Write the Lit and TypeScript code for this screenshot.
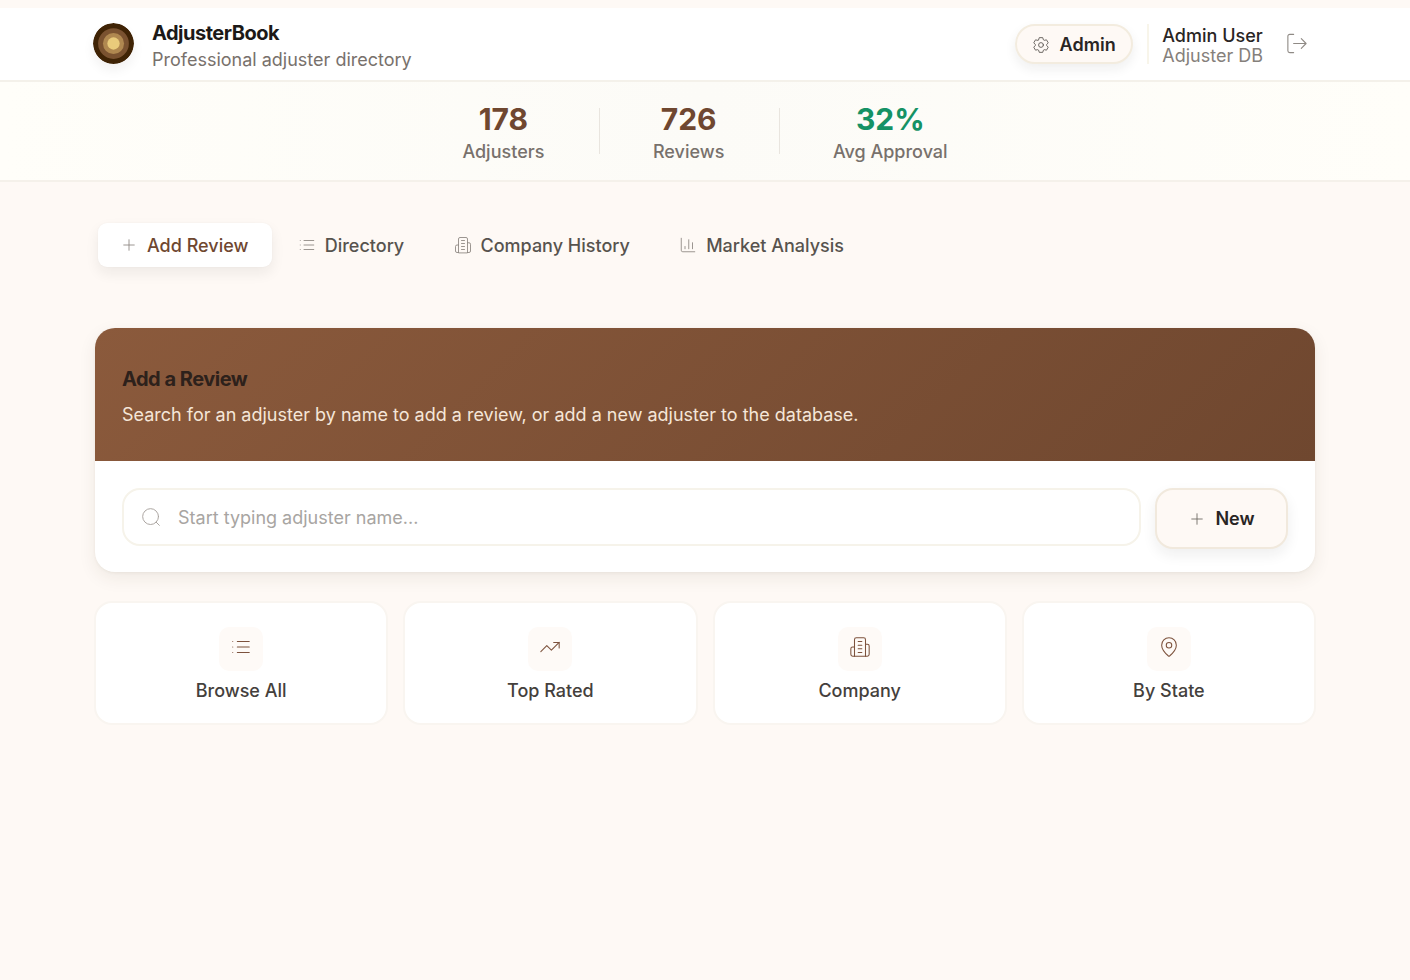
import { LitElement, html, css, svg } from 'lit';
import { customElement, property, state } from 'lit/decorators.js';
import { classMap } from 'lit/directives/class-map.js';

const ICONS: Record<string, unknown> = {
  plus: svg`<path d="M5 12h14M12 5v14" />`,
  list: svg`<path d="M8 6h13M8 12h13M8 18h13M3 6h.01M3 12h.01M3 18h.01" />`,
  building: svg`
    <path d="M6 22V4a2 2 0 0 1 2-2h8a2 2 0 0 1 2 2v18Z" />
    <path d="M6 12H4a2 2 0 0 0-2 2v6a2 2 0 0 0 2 2h2" />
    <path d="M18 9h2a2 2 0 0 1 2 2v9a2 2 0 0 1-2 2h-2" />
    <path d="M10 6h4M10 10h4M10 14h4M10 18h4" />`,
  chart: svg`<path d="M3 3v16a2 2 0 0 0 2 2h16M18 17V9M13 17V5M8 17v-3" />`,
  search: svg`<circle cx="11.5" cy="11.5" r="9.5" /><path d="m22 22-3.8-3.8" />`,
  trending: svg`<path d="M16 7h6v6" /><path d="m22 7-8.5 8.5-5-5L2 17" />`,
  pin: svg`
    <path d="M20 10c0 4.993-5.539 10.193-7.399 11.799a1 1 0 0 1-1.202 0C9.539 20.193 4 14.993 4 10a8 8 0 0 1 16 0" />
    <circle cx="12" cy="10" r="3" />`,
  logout: svg`<path d="M9 21.5H5a2 2 0 0 1-2-2v-15a2 2 0 0 1 2-2h4M17 17l5-5-5-5M22 12H9" />`,
  settings: svg`
    <path d="M8.8 5.1 9.7 2.2h4.6l.9 2.9 1.18.68 2.96-.67 2.3 3.98-2.06 2.23v1.36l2.06 2.23-2.3 3.98-2.96-.67-1.18.68-.9 2.9H9.7l-.9-2.9-1.18-.68-2.96.67-2.3-3.98 2.06-2.23v-1.36L2.36 9.09l2.3-3.98 2.96.67Z" />
    <circle cx="12" cy="12" r="3.2" />`
};

@customElement('ab-icon')
class AbIcon extends LitElement {
  @property() name = '';

  static styles = css`
    :host {
      display: inline-flex;
      flex: none;
      width: 18px;
      height: 18px;
    }
    svg {
      width: 100%;
      height: 100%;
      fill: none;
      stroke: currentColor;
      stroke-width: 1.15;
      stroke-linecap: round;
      stroke-linejoin: round;
    }
  `;

  render() {
    return html`<svg viewBox="0 0 24 24">${ICONS[this.name]}</svg>`;
  }
}

@customElement('app-root')
class AppRoot extends LitElement {
  @state() private activeTab = 'add';

  private stats = [
    { value: '178', label: 'Adjusters' },
    { value: '726', label: 'Reviews' },
    { value: '32%', label: 'Avg Approval', good: true }
  ];

  private tabs = [
    { id: 'add', icon: 'plus', label: 'Add Review' },
    { id: 'directory', icon: 'list', label: 'Directory' },
    { id: 'company', icon: 'building', label: 'Company History' },
    { id: 'market', icon: 'chart', label: 'Market Analysis' }
  ];

  private shortcuts = [
    { icon: 'list', label: 'Browse All' },
    { icon: 'trending', label: 'Top Rated' },
    { icon: 'building', label: 'Company' },
    { icon: 'pin', label: 'By State' }
  ];

  static styles = css`
    :host {
      display: block;
      box-sizing: border-box;
      min-height: 980px;
      padding-top: 8px;
      background: #fef9f5;
      color: #1c1917;
      font-family: Inter, 'Liberation Sans', sans-serif;
      font-size: 18px;
      line-height: 24px;
    }
    * {
      box-sizing: border-box;
    }
    button,
    input {
      font: inherit;
      color: inherit;
      margin: 0;
    }

    .header {
      display: flex;
      align-items: center;
      height: 74px;
      padding: 0 102px 0 93px;
      background: #fff;
      border-bottom: 2px solid #f4f1ea;
    }
    .logo {
      width: 41px;
      height: 41px;
      margin-bottom: 1px;
      border-radius: 50%;
      box-shadow: 0 6px 12px rgba(28, 25, 23, 0.06);
    }
    .brand {
      flex: 1;
      margin-left: 18px;
      padding-top: 3px;
    }
    .brand-name {
      font-size: 20px;
      font-weight: 700;
      line-height: 28px;
      letter-spacing: -0.5px;
    }
    .brand-sub {
      line-height: 25px;
      color: #78716c;
    }
    .admin {
      display: flex;
      align-items: center;
      justify-content: center;
      gap: 9px;
      width: 118px;
      height: 40px;
      padding: 1px 0 0;
      border: 2px solid #f3ecdf;
      border-radius: 20px;
      background: #fef9f5;
      font-weight: 600;
      letter-spacing: 0.1px;
      color: #292524;
      box-shadow: 0 5px 12px rgba(28, 25, 23, 0.07);
    }
    .admin ab-icon {
      color: #57534e;
    }
    .user {
      height: 40px;
      margin-left: 14px;
      padding: 2px 0 0 13px;
      border-left: 2px solid #f8f5ea;
      line-height: 20px;
    }
    .user-name {
      font-weight: 500;
      color: #292524;
    }
    .user-org {
      color: #85807b;
    }
    .logout {
      margin: 0 0 1px 22px;
      width: 23px;
      height: 23px;
      color: #8f8a85;
    }

    .stats {
      display: flex;
      justify-content: center;
      height: 100px;
      padding-top: 19px;
      background: linear-gradient(90deg, #fffef9, #fcfbf7 50%, #fffef9);
      border-bottom: 2px solid #f5f1ea;
    }
    .stat {
      padding: 0 54.3px;
      text-align: center;
    }
    .stat + .stat {
      position: relative;
    }
    .stat + .stat::before {
      content: '';
      position: absolute;
      left: 0;
      top: 7px;
      width: 1px;
      height: 46px;
      background: #e9e5df;
    }
    .stat-value {
      font-size: 30px;
      font-weight: 700;
      line-height: 36px;
      color: #6f4730;
    }
    .stat-value.good {
      color: #159265;
    }
    .stat-label {
      font-weight: 500;
      line-height: 30px;
      color: #78716c;
    }

    .page {
      padding: 41px 95px 0;
    }
    .tabs {
      display: flex;
      gap: 4px;
      padding-left: 3px;
    }
    .tab {
      display: flex;
      align-items: center;
      gap: 9px;
      height: 44px;
      padding: 1px 23.3px 0 22px;
      border: 0;
      border-radius: 9px;
      background: none;
      font-weight: 500;
      color: #57534e;
    }
    .tab.active {
      background: #fff;
      color: #6f4730;
      box-shadow: 0 6px 14px rgba(28, 25, 23, 0.07), 0 0 2px rgba(28, 25, 23, 0.04);
    }
    .tab ab-icon {
      margin-bottom: 1px;
      color: #8c8680;
    }

    .card {
      margin-top: 61px;
      overflow: hidden;
      border-radius: 20px;
      background: #fff;
      box-shadow: 0 6px 18px rgba(68, 52, 30, 0.08), 0 1px 3px rgba(68, 60, 20, 0.06);
    }
    .card-head {
      height: 133px;
      padding: 36px 27px 0;
      background: linear-gradient(135deg, #8b5a3c, #6f472f);
    }
    .card-title {
      margin: 0;
      font-size: 20px;
      font-weight: 700;
      line-height: 30px;
      letter-spacing: -0.5px;
      color: #2d211b;
    }
    .card-text {
      margin: 0;
      padding-top: 8px;
      line-height: 26px;
      color: #f5e6d8;
    }
    .card-body {
      display: flex;
      align-items: flex-start;
      gap: 14px;
      height: 111px;
      padding: 27px 27px 0;
    }
    .search {
      display: flex;
      flex: 1;
      align-items: center;
      gap: 17px;
      height: 58px;
      padding: 0 18px 0 17px;
      border: 2px solid #f6f3ea;
      border-radius: 18px;
    }
    .search ab-icon {
      width: 20px;
      height: 20px;
      color: #a8a29e;
    }
    .search input {
      flex: 1;
      border: 0;
      padding: 2px 0 0;
      outline: none;
      background: none;
    }
    .search input::placeholder {
      color: #a8a5a2;
      opacity: 1;
    }
    .new {
      display: flex;
      align-items: center;
      justify-content: center;
      gap: 9px;
      width: 133px;
      height: 61px;
      padding: 0;
      border: 2px solid #f1e9dd;
      border-radius: 18px;
      background: #fef9f5;
      font-weight: 600;
      color: #292524;
      box-shadow: 0 6px 14px rgba(28, 25, 23, 0.07);
    }
    .new ab-icon {
      color: #6b6661;
    }

    .shortcuts {
      display: grid;
      grid-template-columns: repeat(4, 1fr);
      gap: 15px;
      margin: 29px -1px 0;
    }
    .shortcut {
      display: flex;
      flex-direction: column;
      align-items: center;
      height: 124px;
      padding: 24px 0 0;
      border: 2px solid #f9f5f0;
      border-radius: 18px;
      background: #fff;
      font-weight: 500;
      color: #44403c;
    }
    .tile {
      display: flex;
      align-items: center;
      justify-content: center;
      width: 44px;
      height: 44px;
      margin-bottom: 8px;
      padding-bottom: 4px;
      border-radius: 10px;
      background: #fefaf7;
      color: #7d523d;
    }
    .tile ab-icon {
      width: 22px;
      height: 22px;
    }
  `;

  render() {
    return html`
      <header class="header">
        ${this._renderLogo()}
        <div class="brand">
          <div class="brand-name">AdjusterBook</div>
          <div class="brand-sub">Professional adjuster directory</div>
        </div>
        <button class="admin"><ab-icon name="settings"></ab-icon>Admin</button>
        <div class="user">
          <div class="user-name">Admin User</div>
          <div class="user-org">Adjuster DB</div>
        </div>
        <ab-icon class="logout" name="logout"></ab-icon>
      </header>

      <section class="stats">
        ${this.stats.map(
          (s) => html`
            <div class="stat">
              <div class="stat-value ${s.good ? 'good' : ''}">${s.value}</div>
              <div class="stat-label">${s.label}</div>
            </div>
          `
        )}
      </section>

      <main class="page">
        <nav class="tabs">
          ${this.tabs.map(
            (t) => html`
              <button
                class=${classMap({ tab: true, active: t.id === this.activeTab })}
                @click=${() => (this.activeTab = t.id)}
              >
                <ab-icon name=${t.icon}></ab-icon>${t.label}
              </button>
            `
          )}
        </nav>

        <section class="card">
          <div class="card-head">
            <h2 class="card-title">Add a Review</h2>
            <p class="card-text">
              Search for an adjuster by name to add a review, or add a new adjuster to the database.
            </p>
          </div>
          <div class="card-body">
            <label class="search">
              <ab-icon name="search"></ab-icon>
              <input type="text" placeholder="Start typing adjuster name..." />
            </label>
            <button class="new"><ab-icon name="plus"></ab-icon>New</button>
          </div>
        </section>

        <div class="shortcuts">
          ${this.shortcuts.map(
            (s) => html`
              <button class="shortcut">
                <span class="tile"><ab-icon name=${s.icon}></ab-icon></span>
                ${s.label}
              </button>
            `
          )}
        </div>
      </main>
    `;
  }

  private _renderLogo() {
    return html`
      <svg class="logo" viewBox="0 0 40 40">
        <circle cx="20" cy="20" r="20" fill="#3f2305" />
        <circle cx="20" cy="20" r="15" fill="#7a5230" />
        <circle cx="20" cy="20" r="10.3" fill="#b08850" />
        <circle cx="20" cy="20" r="6" fill="#e9cb7b" />
      </svg>
    `;
  }
}
